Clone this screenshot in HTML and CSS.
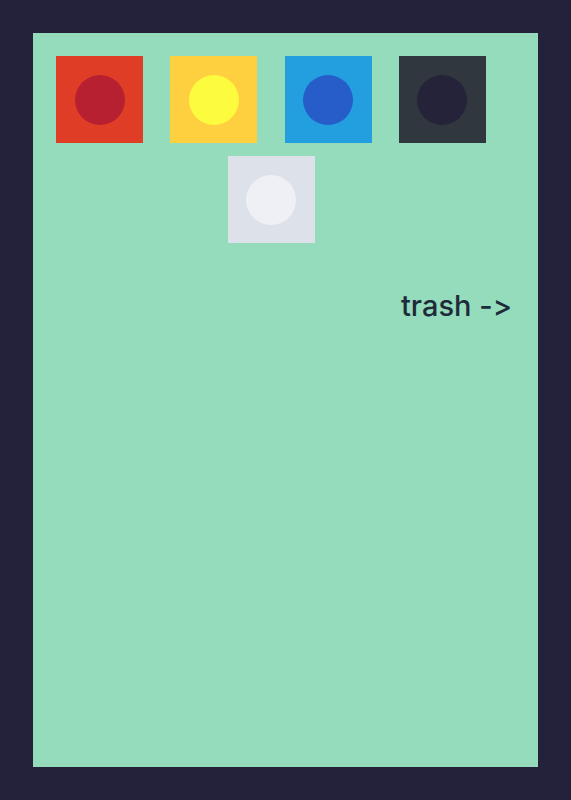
FILE: index.html
```html
<!DOCTYPE html>
<html>
  <head>
    <link rel="stylesheet" href="styles.css">
    <title>Colors</title>
  </head>
  <body>
    <div class="board">
      <div class="swatches">
        <div class="swatch red"><div class="dot"></div></div>
        <div class="swatch yellow"><div class="dot"></div></div>
        <div class="swatch blue"><div class="dot"></div></div>
        <div class="swatch dark"><div class="dot"></div></div>
        <div class="swatch white"><div class="dot"></div></div>
      </div>
      <div class="trash">trash -&gt;</div>
    </div>
  </body>
</html>
```

FILE: styles.css
```css
html, body {
  margin: 0;
  padding: 0;
}

body {
  background-color: #24223a;
  padding: 33px;
  font-family: "Inter", "DejaVu Sans", sans-serif;
}

.board {
  background-color: #94dcbb;
  width: 505px;
  height: 734px;
  box-sizing: border-box;
  padding: 23px 26px 0 23px;
}

.swatches {
  width: 430px;
  display: flex;
  flex-wrap: wrap;
  justify-content: center;
  column-gap: 27.3px;
  row-gap: 13px;
}

.swatch {
  width: 87px;
  height: 87px;
  display: flex;
  justify-content: center;
  align-items: center;
}

.dot {
  width: 50px;
  height: 50px;
  border-radius: 50%;
}

.red { background-color: #e03d26; }
.red .dot { background-color: #b72031; }

.yellow { background-color: #fed03f; }
.yellow .dot { background-color: #fcfb3d; }

.blue { background-color: #239fdf; }
.blue .dot { background-color: #265dc9; }

.dark { background-color: #31373e; }
.dark .dot { background-color: #24233a; }

.white { background-color: #dde1ea; }
.white .dot { background-color: #eef0f5; }

.trash {
  margin-top: 45px;
  text-align: right;
  font-size: 29px;
  font-weight: 500;
  font-feature-settings: "calt" 0, "liga" 0;
  color: #1e2b3a;
}
```
